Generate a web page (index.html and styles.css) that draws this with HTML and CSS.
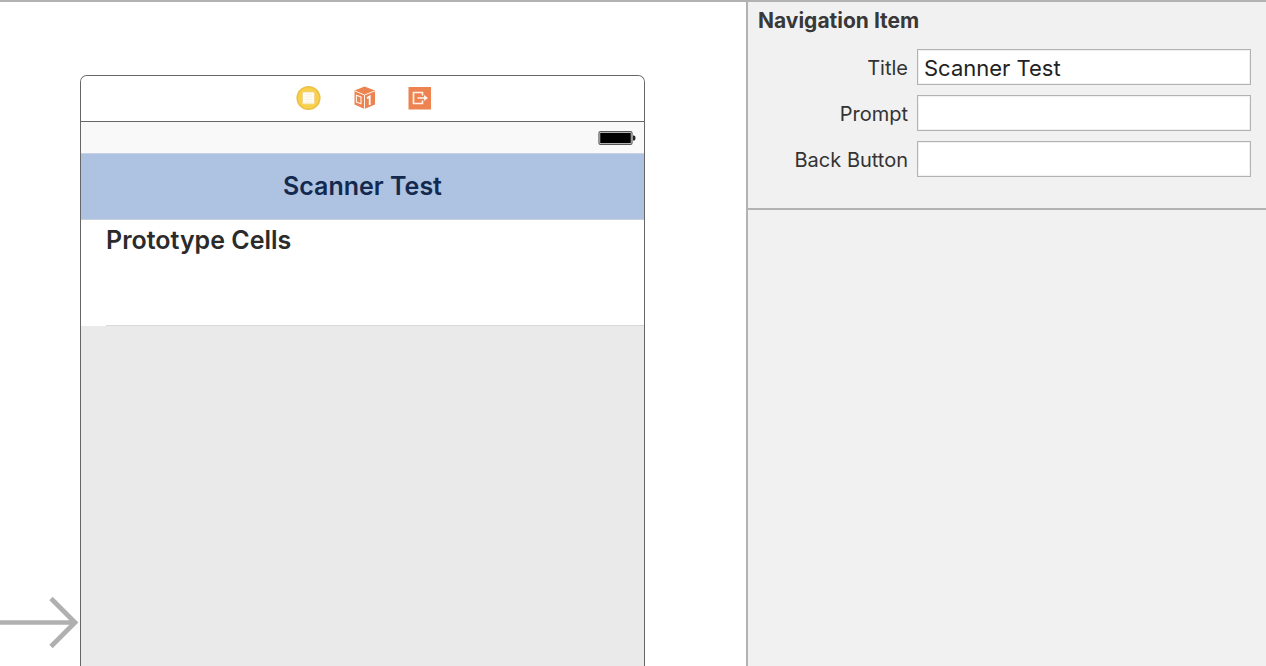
FILE: index.html
```html
<!DOCTYPE html>
<html lang="en">
<head>
<meta charset="utf-8">
<title>Storyboard - Navigation Item</title>
<link rel="stylesheet" href="styles.css">
</head>
<body>
<div class="editor">
  <main class="canvas">
    <svg class="entry-arrow" viewBox="0 0 80 52" fill="none" stroke="#b0b0b0" aria-hidden="true">
      <path d="M0 26.5H75" stroke-width="4.4"/>
      <path d="M51 2.5L75 26.5L51 50.5" stroke-width="4.8"/>
    </svg>
    <section class="scene">
      <div class="dock">
        <svg class="dock-icon" viewBox="0 0 26 26" aria-label="View Controller">
          <circle cx="13.5" cy="13" r="11.3" fill="#f8d149" stroke="#ecc04b" stroke-width="1.6"/>
          <rect x="7.5" y="7" width="12" height="12" rx="1" fill="#fffdf8" stroke="#f3d68f"/>
          <path d="M9.5 9.5h8M9.5 12h8M9.5 14.5h8M9.5 17h8" stroke="#fbf1d8"/>
        </svg>
        <svg class="dock-icon" viewBox="0 0 26 26" aria-label="First Responder">
          <path d="M13.5 1.5L24 5.5V19.5L13.5 24L3.5 19.5V5.5Z" fill="#ed8350"/>
          <path d="M3.5 5.8L13.5 10L24 5.8M13.5 10V24" fill="none" stroke="#fff3ec" stroke-width="1"/>
          <path d="M5.4 10.2L10 12V18.8L5.4 17Z" fill="none" stroke="#fff3ec" stroke-width="1.1"/>
          <path d="M16 13.2L18.7 11.5V20" fill="none" stroke="#fff" stroke-width="1.8"/>
        </svg>
        <svg class="dock-icon" viewBox="0 0 26 26" aria-label="Exit">
          <rect x="1.5" y="2" width="22.5" height="22.5" fill="#ed8350"/>
          <path d="M15.5 10.5V7.5H6.5V18.5H15.5V15.5" fill="none" stroke="#fff3ec" stroke-width="1.6"/>
          <path d="M10.5 13H18" stroke="#fff3ec" stroke-width="1.6"/>
          <path d="M17 10L21 13L17 16Z" fill="#fff3ec"/>
        </svg>
      </div>
      <div class="status-bar">
        <svg class="battery" viewBox="0 0 38 16" aria-label="Battery full">
          <rect x="1" y="1.5" width="33" height="13" rx="1.5" fill="#fff" stroke="#555" stroke-width="1.2"/>
          <rect x="2.2" y="2.7" width="30.6" height="10.6" fill="#000"/>
          <path d="M35 5.5h1q1.5 0 1.5 2.5t-1.5 2.5h-1z" fill="#222"/>
        </svg>
      </div>
      <header class="nav-bar">Scanner Test</header>
      <div class="cells">
        <h2 class="cells-title">Prototype Cells</h2>
      </div>
    </section>
  </main>
  <aside class="inspector">
    <form class="group">
      <h1 class="group-title">Navigation Item</h1>
      <div class="fields">
        <label class="label" for="title">Title</label>
        <input class="field" id="title" type="text" value="Scanner Test">
        <label class="label" for="prompt">Prompt</label>
        <input class="field" id="prompt" type="text">
        <label class="label" for="back">Back Button</label>
        <input class="field" id="back" type="text">
      </div>
    </form>
  </aside>
</div>
</body>
</html>
```

FILE: styles.css
```css
* {
  box-sizing: border-box;
}

body {
  margin: 0;
  font-family: Inter, "Liberation Sans", sans-serif;
  background: #fff;
}

.editor {
  display: flex;
  height: 100vh;
  border-top: 2px solid #b2b2b2;
}

.canvas {
  position: relative;
  display: flex;
  flex: 1;
  min-width: 0;
  padding: 73px 101px 0 80px;
  overflow: hidden;
}

.entry-arrow {
  position: absolute;
  left: 0;
  bottom: 18px;
  width: 80px;
  height: 52px;
}

.scene {
  display: flex;
  flex: 1;
  flex-direction: column;
  border: 1px solid #666;
  border-bottom: 0;
  border-radius: 7px 7px 0 0;
  background: #eaeaea;
  overflow: hidden;
}

.dock {
  display: flex;
  align-items: center;
  justify-content: center;
  gap: 30px;
  height: 46px;
  padding: 0 0 1px 2px;
  border-bottom: 1px solid #666;
  background: #fff;
}

.dock-icon {
  width: 26px;
  height: 26px;
}

.status-bar {
  display: flex;
  align-items: center;
  justify-content: flex-end;
  height: 31px;
  padding-right: 8px;
  background: #f9f9f9;
}

.battery {
  width: 38px;
  height: 16px;
}

.nav-bar {
  height: 67px;
  border-top: 1px solid #c8d2e2;
  border-bottom: 1px solid #c8cfda;
  background: #aec2e1;
  color: #13294d;
  font-size: 25px;
  font-weight: 600;
  line-height: 64px;
  text-align: center;
}

.cells {
  display: flex;
  flex-direction: column;
  height: 106px;
  padding-left: 25px;
  background: #fff;
}

.cells-title {
  flex: 1;
  margin: 0;
  padding-top: 4px;
  border-bottom: 1px solid #d8d8d8;
  color: #2b2b2b;
  font-size: 25px;
  font-weight: 600;
  line-height: 32px;
}

.inspector {
  width: 520px;
  border-left: 2px solid #b2b2b2;
  background: #f1f1f1;
}

.group {
  padding: 7px 15px 31px 10px;
  border-bottom: 2px solid #b2b2b2;
}

.group-title {
  margin: 0 0 16px;
  color: #383838;
  font-size: 21px;
  font-weight: 700;
  line-height: 24px;
}

.fields {
  display: grid;
  grid-template-columns: 150px 1fr;
  align-items: center;
  gap: 10px 9px;
}

.label {
  color: #333;
  font-size: 20px;
  line-height: 34px;
  text-align: right;
  white-space: nowrap;
  padding-top: 2px;
}

.field {
  width: 100%;
  height: 36px;
  padding: 2px 6px 0;
  border: 1px solid #b2b2b2;
  border-radius: 0;
  background: #fff;
  box-shadow: inset 0 0 0 1px #f1f1f1;
  color: #222;
  font-family: inherit;
  font-size: 22px;
  outline: 0;
}
```
